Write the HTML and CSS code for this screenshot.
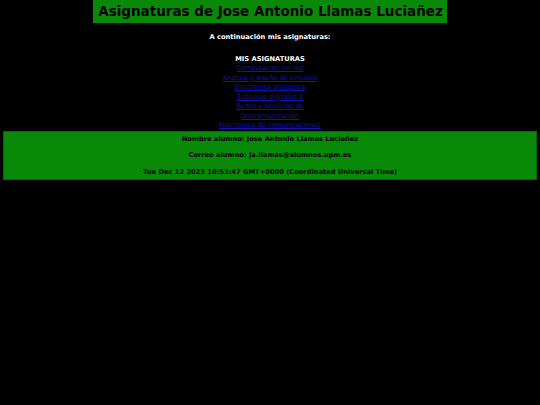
FILE: index.html
```html
<!DOCTYPE html>
<html lang="es">
<head>
<meta charset="utf-8">
<title>Asignaturas</title>
<link rel="stylesheet" href="styles.css">
</head>
<body>
<header class="top">
  <h1 class="title">Asignaturas de Jose Antonio Llamas Luciañez</h1>
</header>
<p class="intro">A continuación mis asignaturas:</p>
<section class="subjects">
  <h2 class="subjects-title">MIS ASIGNATURAS</h2>
  <ul class="subject-list">
    <li><a href="#">Computacion en red</a></li>
    <li><a href="#">Analisis y diseño de circuitos</a></li>
    <li><a href="#">Electronica analogica</a></li>
    <li><a href="#">Sistemas digitales 2</a></li>
    <li><a href="#">Redes y servicios de telecomunicacion</a></li>
    <li><a href="#">Electronica de comunicaciones</a></li>
  </ul>
</section>
<footer class="info">
  <p>Nombre alumno: Jose Antonio Llamas Luciañez</p>
  <p>Correo alumno: ja.llamas@alumnos.upm.es</p>
  <p>Tue Dec 12 2023 10:53:47 GMT+0000 (Coordinated Universal Time)</p>
</footer>
</body>
</html>
```
FILE: styles.css
```css
html, body {
  margin: 0;
  padding: 0;
  background: #000;
}
body {
  font-family: "DejaVu Sans", Verdana, sans-serif;
  font-weight: bold;
  color: #fff;
  font-size: 6.7px;
  text-align: center;
}
.top {
  display: flex;
  justify-content: center;
}
.title {
  margin: 0;
  background: #088a08;
  color: #000;
  font-size: 13.5px;
  line-height: 17px;
  padding: 3px 4px 3px 5px;
  border: 1px solid #000;
  border-top: 0;
}
.intro {
  margin: 8px 0 0;
  line-height: 10px;
}
.subjects {
  margin-top: 12px;
}
.subjects-title {
  margin: 0;
  font-size: 6.7px;
  line-height: 10px;
}
.subject-list {
  list-style: none;
  margin: 0 auto;
  padding: 0;
  width: 118px;
  font-weight: normal;
}
.subject-list li {
  line-height: 9.5px;
}
.subject-list a {
  color: #1414a8;
  font-size: 6.6px;
}
.info {
  margin: 0 3px;
  background: #088a08;
  color: #000;
  border: 1px solid #066606;
  padding: 2px 0;
}
.info p {
  margin: 0;
  line-height: 10px;
}
.info p + p {
  margin-top: 6.5px;
}
```
